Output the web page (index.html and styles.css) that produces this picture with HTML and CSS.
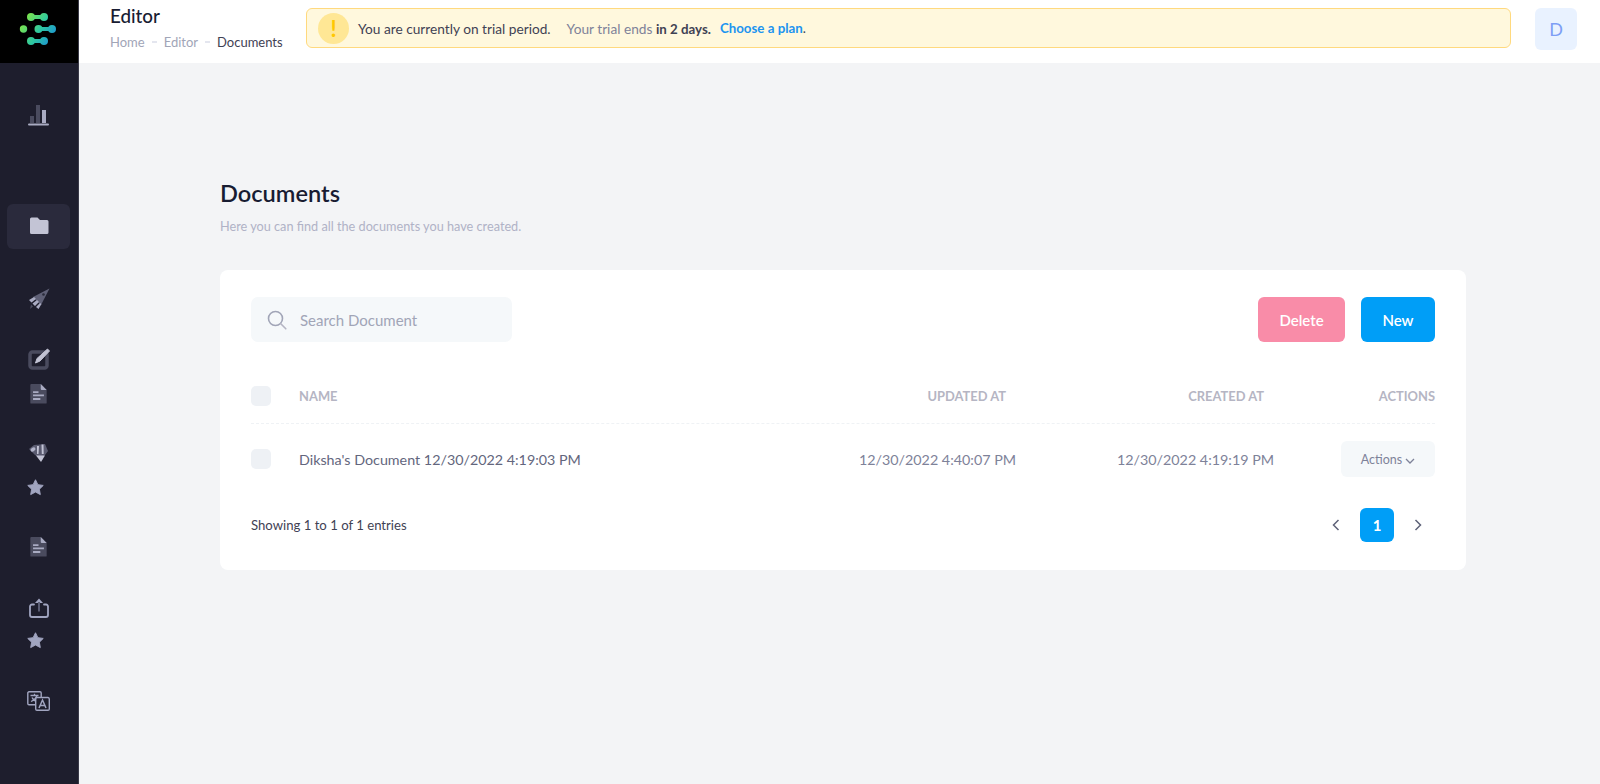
FILE: index.html
```html
<!DOCTYPE html>
<html lang="en">
<head>
<meta charset="utf-8">
<title>Documents</title>
<link rel="stylesheet" href="styles.css">
</head>
<body>
<svg class="defs" width="0" height="0" aria-hidden="true">
  <defs>
    <linearGradient id="logoGrad" gradientUnits="userSpaceOnUse" x1="22" y1="16" x2="56" y2="38">
      <stop offset="0" stop-color="#8ae83c"/>
      <stop offset="0.55" stop-color="#2fc9a0"/>
      <stop offset="1" stop-color="#1b8ed8"/>
    </linearGradient>
    <symbol id="star" viewBox="0 0 18 18"><path d="M9 .8l2.500 5.200 5.700.8-4.100 4 1 5.700L9 13.800l-5.100 2.700 1-5.700-4.100-4 5.700-.8z" fill="#a1a5c0" stroke="#a1a5c0" stroke-linejoin="round"/></symbol>
    <symbol id="doc" viewBox="0 0 18 22"><path d="M1 0h10.500L18 6.500V20.500a1 1 0 0 1-1 1H1a1 1 0 0 1-1-1V1a1 1 0 0 1 1-1z" fill="#4a4b5e"/><path d="M11.500 0L18 6.500h-5.500a1 1 0 0 1-1-1z" fill="#a9abc2"/><path d="M3 8h6v2H3zM3 11.500h12v2H3zM3 15.500h8v2H3z" fill="#a9abc2"/></symbol>
  </defs>
</svg>

<aside class="sidebar">
  <div class="logo">
    <svg width="78" height="62" viewBox="0 0 78 62">
      <g fill="url(#logoGrad)">
        <circle cx="23.500" cy="29" r="3.700"/>
        <circle cx="31" cy="17" r="4"/><circle cx="44" cy="17" r="4"/><rect x="31" y="15" width="13" height="4"/>
        <circle cx="38.500" cy="29" r="4"/><circle cx="52" cy="29" r="4"/><rect x="38.500" y="27" width="13.500" height="4"/>
        <circle cx="31" cy="41" r="4"/><circle cx="44" cy="41" r="4"/><rect x="31" y="39" width="13" height="4"/>
      </g>
    </svg>
  </div>
  <nav class="nav">
    <a class="nav-item item-chart">
      <svg width="22" height="22" viewBox="0 0 22 22"><rect x="2" y="12" width="4" height="7" fill="#4a4b5e"/><rect x="8" y="1" width="4" height="18" fill="#4a4b5e"/><rect x="14" y="6" width="4" height="13" fill="#a9abc2"/><rect y="19.500" width="21" height="2" rx="1" fill="#a9abc2"/></svg>
    </a>
    <a class="nav-item item-active">
      <svg width="20" height="18" viewBox="0 0 20 18"><path d="M1 2a1.500 1.500 0 0 1 1.500-1.500h6L11 3h7a1.500 1.500 0 0 1 1.500 1.500v11A1.500 1.500 0 0 1 18 17H2.500A1.500 1.500 0 0 1 1 15.500z" fill="#c3c4d5"/></svg>
    </a>
    <a class="nav-item item-rocket">
      <svg width="22" height="22" viewBox="0 0 22 22"><path d="M21.500.5L5 9l8 8z" fill="#5f6076"/><path d="M1 12l5-3 2 2-4.500 3.500zM4.500 15.500L9 12l2 2-4 4zM8 19l4-4 1.500 1-3 5z" fill="#a9abc2"/><path d="M3 16.500l2 2-3 2.500z" fill="#4a4b5e"/><circle cx="15.500" cy="6.500" r="1.300" fill="#2a2b3b"/></svg>
    </a>
    <a class="nav-item item-edit">
      <svg width="22" height="22" viewBox="0 0 22 22"><rect x="2" y="4" width="17" height="16" rx="2.500" fill="none" stroke="#4a4b5e" stroke-width="3.500"/><path d="M19.500 1l2 2-9.500 10-4.500 2 1.500-4.500z" fill="#c3c4d5" stroke="#c3c4d5" stroke-linejoin="round"/></svg>
    </a>
    <a class="nav-item item-doc"><svg width="17" height="20"><use href="#doc"/></svg></a>
    <a class="nav-item item-hands">
      <svg width="21" height="21" viewBox="0 0 21 21"><path d="M1 7l5-4 11-1 3 7-3 4-5 3-5-3z" fill="#5a5b70"/><ellipse cx="5" cy="7.500" rx="2.700" ry="1.800" transform="rotate(-35 5 7.500)" fill="#b1b3c8"/><path d="M9 4h2l-.5 8H9zM13.500 2.500h2l.2 9.500h-1.900z" fill="#c3c4d5"/><path d="M8 13.500h9L13 20z" fill="#c3c4d5"/></svg>
    </a>
    <a class="nav-item item-star"><svg width="17" height="17"><use href="#star"/></svg></a>
    <a class="nav-item item-doc2"><svg width="17" height="20"><use href="#doc"/></svg></a>
    <a class="nav-item item-share">
      <svg width="20" height="20" viewBox="0 0 20 20"><path d="M5 6.500H3a2 2 0 0 0-2 2V17a2 2 0 0 0 2 2h14a2 2 0 0 0 2-2V8.500a2 2 0 0 0-2-2h-2" fill="none" stroke="#a1a5c0" stroke-width="1.800" stroke-linecap="round"/><path d="M10 .5l4 4.500H6z" fill="#a1a5c0"/><rect x="9" y="4" width="2" height="9.500" fill="#5b5d74"/></svg>
    </a>
    <a class="nav-item item-star2"><svg width="17" height="17"><use href="#star"/></svg></a>
    <a class="nav-item item-lang">
      <svg width="23" height="20" viewBox="0 0 23 20"><path d="M2 .8h11a1.200 1.200 0 0 1 1.200 1.200v10.500a1.200 1.200 0 0 1-1.200 1.200H2A1.200 1.200 0 0 1 .8 12.500V2A1.200 1.200 0 0 1 2 .8z" fill="#1e1e2d" stroke="#a1a5c0" stroke-width="1.400"/><path d="M3.500 4.500h8M7.500 2.800v1.700M10 4.500c-1 3-3.500 5-6 6M5 6.500c1 2 3.500 4 6 4.500" fill="none" stroke="#a1a5c0" stroke-width="1.300"/><path d="M10 6.500h11a1.500 1.500 0 0 1 1.300 1.500v10a1.300 1.300 0 0 1-1.300 1.300H10A1.300 1.300 0 0 1 8.700 18V8A1.500 1.500 0 0 1 10 6.500z" fill="#1e1e2d" stroke="#a1a5c0" stroke-width="1.400"/><path d="M12 17l3.500-8 3.500 8M13.200 14.500h4.600" fill="none" stroke="#a1a5c0" stroke-width="1.500"/></svg>
    </a>
  </nav>
</aside>

<div class="main">
  <header class="topbar">
    <div class="heading">
      <div class="heading-title">Editor</div>
      <div class="crumbs">
        <span>Home</span><i class="crumb-sep"></i><span>Editor</span><i class="crumb-sep"></i><span class="crumb-current">Documents</span>
      </div>
    </div>
    <div class="trial">
      <span class="trial-icon">!</span>
      <span class="trial-lead">You are currently on trial period.</span>
      <span class="trial-info">Your trial ends <b>in 2 days.</b></span>
      <span class="trial-link"><a>Choose a plan</a>.</span>
    </div>
    <div class="avatar">D</div>
  </header>

  <main class="content">
    <h1 class="page-title">Documents</h1>
    <p class="page-sub">Here you can find all the documents you have created.</p>

    <section class="card">
      <div class="toolbar">
        <div class="search">
          <svg width="20" height="20" viewBox="0 0 20 20"><circle cx="8.500" cy="8.500" r="7" fill="none" stroke="#a1a5b7" stroke-width="1.600"/><path d="M13.800 13.800l5 5" stroke="#b5b5c3" stroke-width="1.600" stroke-linecap="round"/></svg>
          <span>Search Document</span>
        </div>
        <div class="toolbar-actions">
          <button class="btn btn-delete">Delete</button>
          <button class="btn btn-new">New</button>
        </div>
      </div>

      <div class="row row-head">
        <span class="check"></span>
        <span class="cell-name">NAME</span>
        <span class="cell-updated">UPDATED AT</span>
        <span class="cell-created">CREATED AT</span>
        <span class="cell-actions">ACTIONS</span>
      </div>
      <div class="row row-body">
        <span class="check"></span>
        <span class="cell-name">Diksha's Document 12/30/2022 4:19:03 PM</span>
        <span class="cell-updated">12/30/2022 4:40:07 PM</span>
        <span class="cell-created">12/30/2022 4:19:19 PM</span>
        <span class="cell-actions">
          <button class="actions-btn">Actions
            <svg width="10" height="6" viewBox="0 0 10 6"><path d="M1 1l4 4 4-4" fill="none" stroke="#7e8299" stroke-width="1.300"/></svg>
          </button>
        </span>
      </div>

      <div class="card-foot">
        <span class="showing">Showing 1 to 1 of 1 entries</span>
        <div class="pager">
          <svg width="8" height="12" viewBox="0 0 8 12"><path d="M6.500 1L1.500 6l5 5" fill="none" stroke="#5e6278" stroke-width="1.500"/></svg>
          <span class="page-num">1</span>
          <svg width="8" height="12" viewBox="0 0 8 12"><path d="M1.500 1l5 5-5 5" fill="none" stroke="#5e6278" stroke-width="1.500"/></svg>
        </div>
      </div>
    </section>
  </main>
</div>
</body>
</html>
```

FILE: styles.css
```css
* { box-sizing: border-box; }
html, body { height: 100%; }
body {
  margin: 0;
  display: flex;
  height: 784px;
  overflow: hidden;
  font-family: Lato, "Liberation Sans", sans-serif;
  background: #f3f4f6;
  color: #3f4254;
}
.defs { display: block; width: 0; height: 0; }

/* Sidebar */
.sidebar {
  width: 79px;
  flex: none;
  background: #1e1e2d;
  border-right: 1px solid #3a3a48;
}
.logo { height: 63px; background: #000; display: block; }
.logo svg { display: block; }
.nav { display: flex; flex-direction: column; align-items: flex-start; padding-left: 7px; }
.nav-item { display: flex; align-items: center; justify-content: center; height: 24px; width: 63px; }
.item-chart { margin-top: 40px; }
.item-active { margin-top: 77px; height: 45px; padding-bottom: 2px; background: #2a2a3c; border-radius: 6px; }
.item-rocket { margin-top: 38px; }
.item-edit { margin-top: 36px; }
.item-doc { margin-top: 11px; }
.item-hands { margin-top: 34px; }
.item-star { margin-top: 11px; padding-right: 7px; }
.item-doc2 { margin-top: 36px; }
.item-share { margin-top: 37px; }
.item-star2 { margin-top: 8px; padding-right: 7px; }
.item-lang { margin-top: 37px; }

/* Top bar */
.main { flex: 1; min-width: 0; display: flex; flex-direction: column; }
.topbar {
  height: 63px;
  flex: none;
  background: #fff;
  display: flex;
  align-items: flex-start;
  padding: 8px 23px 0 31px;
}
.heading { width: 196px; flex: none; }
.heading-title { font-size: 18.800px; line-height: 16px; font-weight: 500; color: #181c32; }
.crumbs {
  margin-top: 10px;
  display: flex;
  align-items: center;
  font-size: 13px;
  line-height: 16px;
  color: #a1a5b7;
}
.crumb-sep { width: 5px; height: 2px; background: #e4e6ef; margin: 0 7px; }
.crumb-current { color: #3f4254; }

.trial {
  flex: 1;
  height: 40px;
  display: flex;
  align-items: center;
  padding-left: 11px;
  font-size: 13.700px;
  color: #3f4254;
  background: #fff8dd;
  border: 1px solid #ffd97e;
  border-radius: 6px;
}
.trial-icon {
  width: 31px;
  height: 31px;
  border-radius: 50%;
  background: #ffe795;
  color: #ffc700;
  font-size: 22px;
  font-weight: 700;
  display: flex;
  align-items: center;
  justify-content: center;
  margin-right: 9px;
}
.trial-info { margin-left: 16px; color: #7e8299; }
.trial-info b { color: #3f4254; font-weight: 700; font-size: 13.300px; }
.trial-link { margin-left: 9px; font-size: 13.300px; }
.trial-link a { color: #1c94f0; font-weight: 700; }
.avatar {
  width: 42px;
  height: 42px;
  margin-left: 24px;
  border-radius: 6px;
  background: #e9f2ff;
  color: #7d9ef5;
  font-size: 18px;
  display: flex;
  align-items: center;
  justify-content: center;
}

/* Content */
.content { flex: 1; padding: 116px 0 0 141px; }
.page-title { margin: 0; font-size: 23.600px; line-height: 28px; font-weight: 600; color: #181c32; }
.page-sub { margin: 11px 0 0; font-size: 12.700px; line-height: 16px; color: #b0b2c6; }

.card {
  margin-top: 36px;
  width: 1246px;
  height: 300px;
  padding: 27px 31px 0;
  background: #fff;
  border-radius: 8px;
}
.toolbar { display: flex; justify-content: space-between; }
.search {
  width: 261px;
  height: 45px;
  display: flex;
  align-items: center;
  gap: 13px;
  padding-left: 16px;
  border-radius: 7px;
  background: #f5f8fa;
  color: #a1a5b7;
  font-size: 15px;
}
.toolbar-actions { display: flex; gap: 16px; }
.btn {
  height: 45px;
  border: 0;
  border-radius: 6px;
  color: #fff;
  font: 600 15px Lato, "Liberation Sans", sans-serif;
}
.btn-delete { width: 87px; background: #f98ca8; }
.btn-new { width: 74px; background: #009ef7; }

.row {
  display: grid;
  grid-template-columns: 20px 1fr 212px 258px 161px;
  column-gap: 0;
  align-items: center;
}
.row-head {
  height: 56px;
  margin-top: 26px;
  border-bottom: 1px dashed #eff2f5;
  font-size: 12.900px;
  font-weight: 700;
  color: #b5b5c3;
}
.row-head .cell-updated, .row-head .cell-created { padding-right: 10px; }
.row-body { height: 70px; font-size: 14.300px; color: #63667d; }
.check { width: 20px; height: 20px; border-radius: 5px; background: #eef1f5; }
.cell-name { padding-left: 28px; }
.cell-updated, .cell-created, .cell-actions { text-align: right; }
.row-body .cell-updated, .row-body .cell-created { color: #7e8299; }
.actions-btn {
  width: 94px;
  height: 36px;
  border: 0;
  border-radius: 6px;
  background: #f5f8fa;
  color: #7e8299;
  font: 12.500px Lato, "Liberation Sans", sans-serif;
}
.card-foot { display: flex; justify-content: space-between; align-items: center; margin-top: 14px; }
.showing { font-size: 13.150px; color: #3f4254; }
.pager { display: flex; align-items: center; gap: 20px; padding-right: 13px; }
.page-num {
  width: 34px;
  height: 34px;
  border-radius: 6px;
  background: #009ef7;
  color: #fff;
  font-size: 15px;
  font-weight: 700;
  display: flex;
  align-items: center;
  justify-content: center;
}
```
